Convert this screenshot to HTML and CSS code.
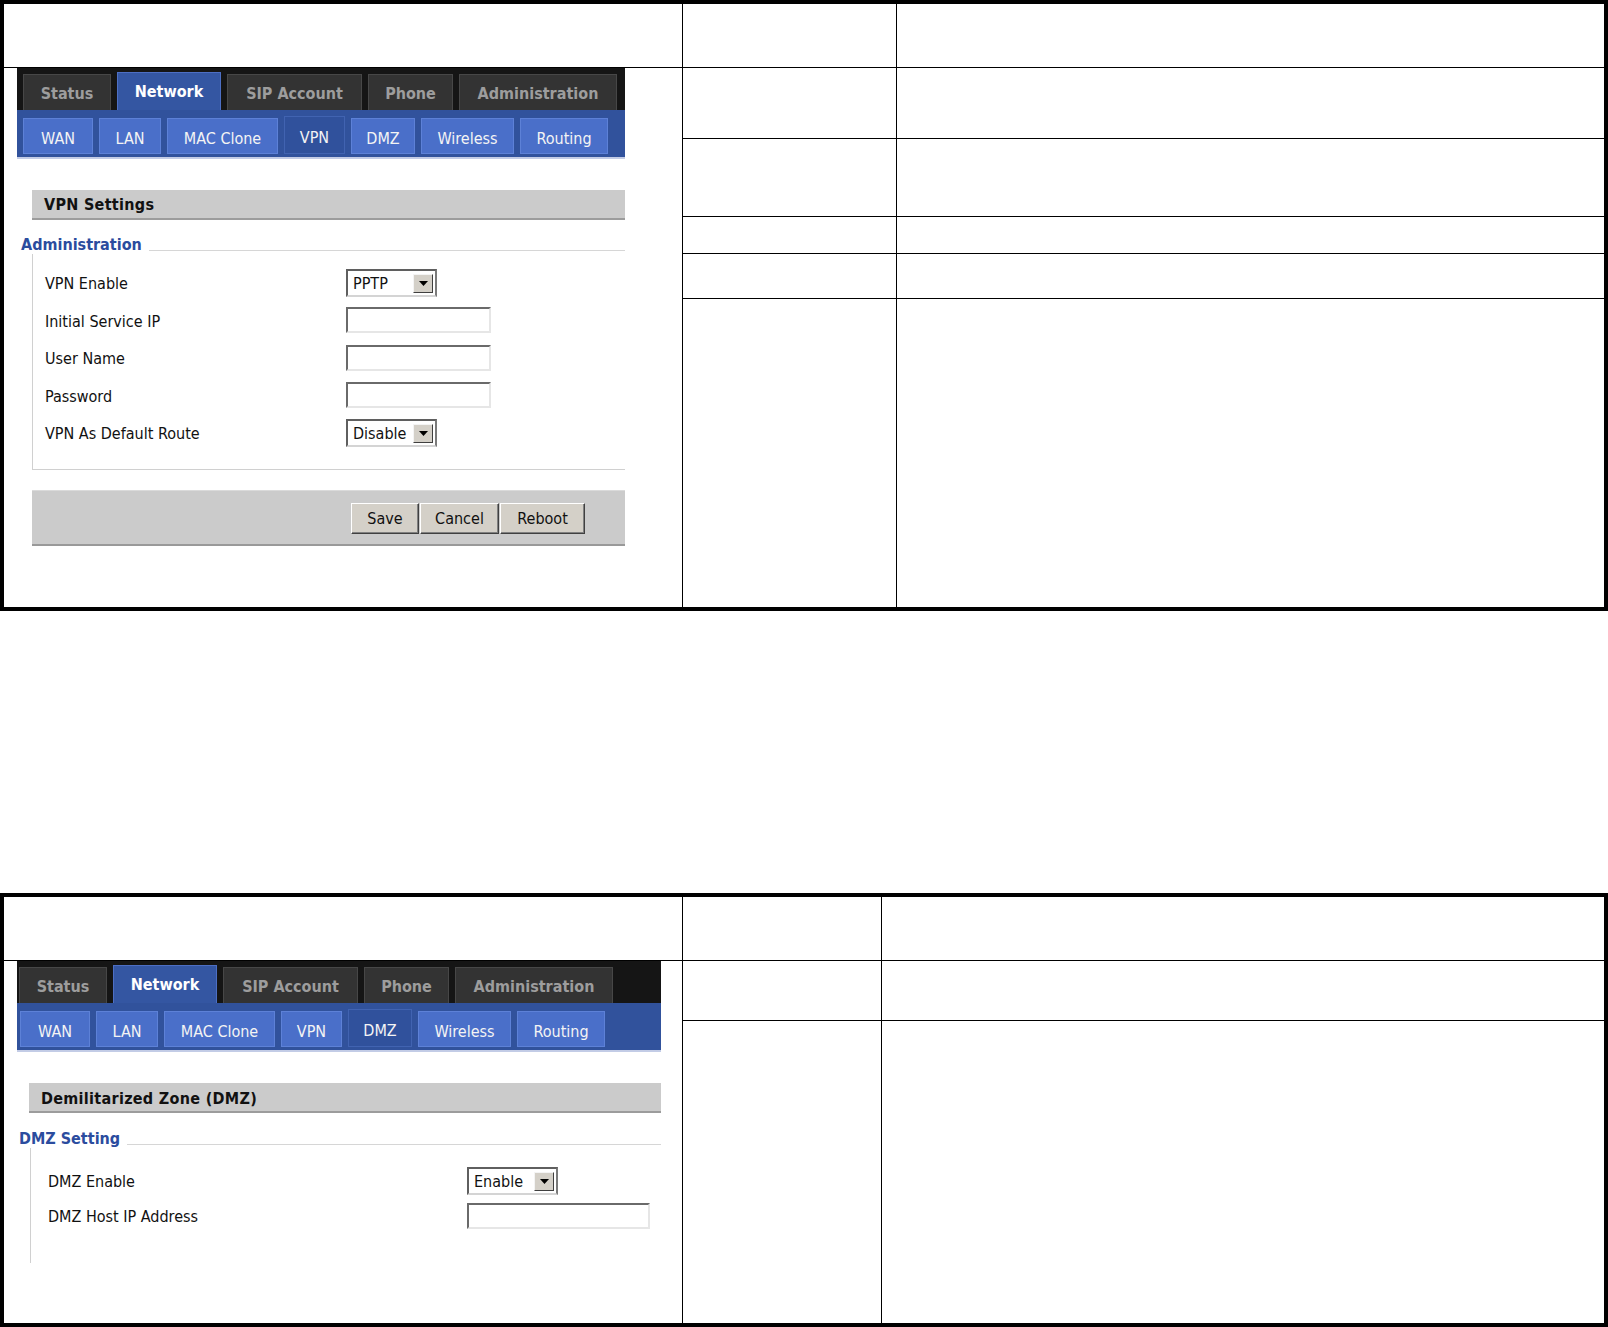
FILE: index.html
```html
<!DOCTYPE html>
<html lang="en">
<head>
  <meta charset="UTF-8">
  <title>VPN and DMZ settings</title>
  <link rel="stylesheet" href="styles.css">
</head>
<body>

  <!-- Table 1: VPN settings page -->
  <div class="sheet sheet-vpn">
    <div class="cell"></div>
    <div class="cell"></div>
    <div class="cell"></div>

    <div class="cell shot">
      <div class="ui">
        <div class="tabs">
          <div class="tab w-status">Status</div>
          <div class="tab on w-network">Network</div>
          <div class="tab w-sip">SIP Account</div>
          <div class="tab w-phone">Phone</div>
          <div class="tab w-admin">Administration</div>
        </div>
        <div class="subtabs">
          <div class="subtab w-wan">WAN</div>
          <div class="subtab w-lan">LAN</div>
          <div class="subtab w-mac">MAC Clone</div>
          <div class="subtab on w-vpn">VPN</div>
          <div class="subtab w-dmz">DMZ</div>
          <div class="subtab w-wireless">Wireless</div>
          <div class="subtab w-routing">Routing</div>
        </div>

        <div class="panel">
          <div class="title">VPN Settings</div>
          <div class="legend">
            <span class="legend-text">Administration</span>
            <span class="legend-line"></span>
          </div>
          <div class="fields">
            <div class="row">
              <span class="label">VPN Enable</span>
              <span class="select w-sel"><span class="select-value">PPTP</span><span class="select-btn"><svg width="9" height="5" viewBox="0 0 9 5"><path d="M0 0h9L4.5 5z" fill="#000"/></svg></span></span>
            </div>
            <div class="row">
              <span class="label">Initial Service IP</span>
              <input class="text w-input" type="text">
            </div>
            <div class="row">
              <span class="label">User Name</span>
              <input class="text w-input" type="text">
            </div>
            <div class="row">
              <span class="label">Password</span>
              <input class="text w-input" type="password">
            </div>
            <div class="row">
              <span class="label">VPN As Default Route</span>
              <span class="select w-sel"><span class="select-value">Disable</span><span class="select-btn"><svg width="9" height="5" viewBox="0 0 9 5"><path d="M0 0h9L4.5 5z" fill="#000"/></svg></span></span>
            </div>
          </div>
          <div class="actions">
            <button class="btn w-save">Save</button>
            <button class="btn w-cancel">Cancel</button>
            <button class="btn w-reboot">Reboot</button>
          </div>
        </div>
      </div>
    </div>

    <div class="cell"></div><div class="cell"></div>
    <div class="cell"></div><div class="cell"></div>
    <div class="cell"></div><div class="cell"></div>
    <div class="cell"></div><div class="cell"></div>
    <div class="cell"></div><div class="cell"></div>
  </div>

  <!-- Table 2: DMZ settings page -->
  <div class="sheet sheet-dmz">
    <div class="cell"></div>
    <div class="cell"></div>
    <div class="cell"></div>

    <div class="cell shot">
      <div class="ui ui-dmz">
        <div class="tabs">
          <div class="tab w-status">Status</div>
          <div class="tab on w-network">Network</div>
          <div class="tab w-sip">SIP Account</div>
          <div class="tab w-phone">Phone</div>
          <div class="tab w-admin">Administration</div>
        </div>
        <div class="subtabs">
          <div class="subtab w-wan">WAN</div>
          <div class="subtab w-lan">LAN</div>
          <div class="subtab w-mac">MAC Clone</div>
          <div class="subtab w-vpn">VPN</div>
          <div class="subtab on w-dmz">DMZ</div>
          <div class="subtab w-wireless">Wireless</div>
          <div class="subtab w-routing">Routing</div>
        </div>

        <div class="panel">
          <div class="title">Demilitarized Zone (DMZ)</div>
          <div class="legend">
            <span class="legend-text">DMZ Setting</span>
            <span class="legend-line"></span>
          </div>
          <div class="fields">
            <div class="row">
              <span class="label">DMZ Enable</span>
              <span class="select w-sel"><span class="select-value">Enable</span><span class="select-btn"><svg width="9" height="5" viewBox="0 0 9 5"><path d="M0 0h9L4.5 5z" fill="#000"/></svg></span></span>
            </div>
            <div class="row">
              <span class="label">DMZ Host IP Address</span>
              <input class="text w-host" type="text">
            </div>
          </div>
        </div>
      </div>
    </div>

    <div class="cell"></div><div class="cell"></div>
    <div class="cell"></div><div class="cell"></div>
  </div>

</body>
</html>
```

FILE: styles.css
```css
  body {
    margin: 0; padding: 0;
    background-color: #fff;
    font-family: "DejaVu Sans Condensed", "DejaVu Sans", sans-serif;
    color: #111;
  }

  /* Document tables drawn as grids: 1px gaps on black give the rules */
  .sheet {
    display: grid;
    gap: 1px;
    background-color: #000;
    border: 4px solid #000;
    width: 1608px;
    box-sizing: border-box;
  }
  .sheet-vpn {
    grid-template-columns: 678px 213px 1fr;
    grid-template-rows: 63px 70px 77px 36px 44px 308px;
  }
  .sheet-dmz {
    margin-top: 282px;
    grid-template-columns: 678px 198px 1fr;
    grid-template-rows: 63px 59px 302px;
  }
  .cell {
    background-color: #fff;
  }
  .shot {
    grid-column: 1;
    grid-row: 2 / -1;
  }

  /* Router web UI screenshot */
  .ui {
    width: 608px;
    margin-left: 13px;
  }
  .ui-dmz {
    width: 644px;
  }

  /* Main tabs */
  .tabs {
    display: flex; align-items: flex-end; gap: 6px;
    height: 42px;
    padding-left: 6px;
    background-color: #151515;
  }
  .ui-dmz .tabs { padding-left: 2px; }
  .tab {
    display: flex; align-items: center; justify-content: center;
    height: 36px;
    box-sizing: border-box;
    padding-top: 2px;
    background-color: #333;
    border: 1px solid #474747; border-bottom: none;
    color: #9d9d9d;
    font-size: 16px; font-weight: bold;
  }
  .tab.on {
    height: 38px;
    padding: 0 0 1px;
    background-color: #3456a2;
    border-color: #4d6fc4;
    color: #fff;
  }
  .w-status { width: 88px; }
  .w-network { width: 104px; }
  .w-sip { width: 135px; }
  .w-phone { width: 85px; }
  .w-admin { width: 158px; }

  /* Sub tabs */
  .subtabs {
    display: flex; align-items: flex-end; gap: 6px;
    height: 49px;
    box-sizing: border-box;
    padding: 0 0 3px 6px;
    background-color: #31529c;
    border-bottom: 2px solid #c3cce6;
  }
  .ui-dmz .subtabs { padding-left: 3px; }
  .subtab {
    display: flex; align-items: center; justify-content: center;
    height: 36px;
    box-sizing: border-box;
    padding-top: 5px;
    background-color: #4a6fc9;
    border: 1px solid #5d81d7;
    color: #f4f4f4;
    font-size: 16px;
  }
  .subtab.on {
    height: 38px;
    padding-top: 4px;
    background-color: #30519c;
    border-color: #4163b1;
  }
  .w-wan { width: 70px; }
  .w-lan { width: 62px; }
  .w-mac { width: 111px; }
  .w-vpn { width: 61px; }
  .w-dmz { width: 64px; }
  .w-wireless { width: 93px; }
  .w-routing { width: 88px; }

  /* Settings panel */
  .panel {
    padding-top: 31px;
    font-size: 16px;
  }
  .title {
    margin-left: 15px;
    height: 28px; line-height: 30px;
    padding-left: 12px;
    background-color: #cbcbcb;
    border-bottom: 2px solid #9c9c9c;
    font-weight: bold;
    letter-spacing: 0.3px;
  }
  .ui-dmz .title { margin-left: 12px; line-height: 31px; }

  .legend {
    display: flex; align-items: flex-end;
    margin: 16px 0 0 4px;
    line-height: 18px;
  }
  .ui-dmz .legend { margin: 17px 0 0 2px; }
  .legend-text {
    color: #2b4c9e;
    font-weight: bold;
  }
  .legend-line {
    flex: 1;
    margin: 0 0 3px 7px;
    border-bottom: 1px solid #d6d6d6;
  }

  .fields {
    margin-left: 15px;
    padding: 10px 0 17px 12px;
    border-left: 1px solid #d0d0d0;
    border-bottom: 1px solid #d0d0d0;
  }
  .ui-dmz .fields {
    margin-left: 13px;
    padding: 15px 0 30px 17px;
    border-bottom: none;
  }
  .row {
    display: flex; align-items: center;
    height: 37.5px;
  }
  .ui-dmz .row { height: 35px; }
  .label { width: 301px; padding-top: 2px; }
  .ui-dmz .label { width: 419px; }

  /* Windows classic form controls */
  .select {
    display: inline-flex; align-items: center; justify-content: space-between;
    height: 28px;
    box-sizing: border-box;
    padding: 1px 2px 0 5px;
    background-color: #fff;
    border: 2px solid; border-color: #5f5f5f #7a7a7a #d4d4d4 #5f5f5f;
  }
  .w-sel { width: 91px; }
  .select-btn {
    display: flex; align-items: center; justify-content: center;
    width: 20px; height: 19px;
    box-sizing: border-box;
    background-color: #d4d0c8;
    border: 1px solid; border-color: #f4f4f4 #404040 #404040 #f4f4f4;
  }
  .text {
    height: 26px;
    box-sizing: border-box;
    margin: 0; padding: 0 4px;
    background-color: #fff;
    border: 2px solid; border-color: #6a6a6a #e6e6e6 #e6e6e6 #6a6a6a;
    font: inherit;
  }
  .w-input { width: 145px; }
  .w-host { width: 183px; }

  .actions {
    display: flex; justify-content: flex-end; align-items: flex-start; gap: 1px;
    margin: 20px 0 0 15px;
    height: 56px;
    padding: 12px 40px 0 0;
    box-sizing: border-box;
    background-color: #cbcbcb;
    border-top: 1px solid #dadada;
    border-bottom: 2px solid #999;
  }
  .btn {
    height: 31px;
    padding: 0;
    background-color: #d4d0c8;
    border: 1px solid; border-color: #fff #404040 #404040 #fff;
    box-shadow: inset -1px -1px #808080;
    font: inherit; color: #111;
  }
  .w-save { width: 68px; }
  .w-cancel { width: 79px; }
  .w-reboot { width: 85px; }
```
